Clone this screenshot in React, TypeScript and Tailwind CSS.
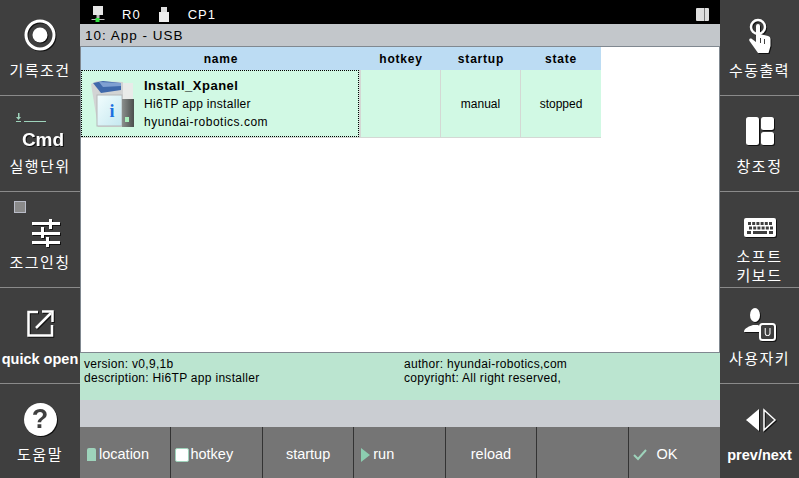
import React from "react";

const kr = "font-['Noto_Sans_CJK_KR','Liberation_Sans',sans-serif]";
const shadow = "drop-shadow-[1px_1px_0_#111111]";

function RecordIcon() {
  return (
    <svg className={`mb-[6px] ${shadow}`} width="32" height="32" viewBox="0 0 32 32">
      <circle cx="16" cy="16" r="14" fill="none" stroke="#fff" strokeWidth="3" />
      <circle cx="16" cy="16" r="7.5" fill="#fff" />
    </svg>
  );
}

function JogIcon() {
  return (
    <svg className={`mt-[6px] ml-[12px] ${shadow}`} width="28" height="28" viewBox="0 0 28 28" fill="#fff">
      <rect x="0" y="3" width="17" height="3" />
      <rect x="20" y="3" width="8" height="3" />
      <rect x="17" y="0" width="3" height="10" />
      <rect x="0" y="13" width="9" height="3" />
      <rect x="12" y="13" width="16" height="3" />
      <rect x="9" y="8" width="3" height="11" />
      <rect x="0" y="22" width="14" height="3" />
      <rect x="17" y="22" width="11" height="3" />
      <rect x="14" y="18" width="3" height="10" />
    </svg>
  );
}

function OpenIcon() {
  return (
    <svg className={`mb-[5px] ${shadow}`} width="27" height="27" viewBox="0 0 27 27" fill="none" stroke="#fff" strokeWidth="2.500">
      <path d="M11 2H1.500V25.500H25V15" />
      <path d="M9 18L24 3" />
      <path d="M15 1.500H25.500V12" />
    </svg>
  );
}

function HelpIcon() {
  return (
    <div className={`mb-[6px] flex h-[33px] w-[33px] items-center justify-center rounded-full bg-white text-[27px] leading-none font-bold text-[#3f3f3f] font-['Liberation_Sans',sans-serif] ${shadow}`}>
      ?
    </div>
  );
}

function HandIcon() {
  return (
    <svg className={`mb-[4px] ${shadow}`} width="22" height="36" viewBox="0 0 22 36">
      <circle cx="9" cy="9" r="7" fill="none" stroke="#fff" strokeWidth="2.500" />
      <path
        d="M7 8a2 2 0 0 1 4 0v8l8 2c1.500.400 2.500 1.500 2.500 3V28l-2 7H9L0.500 23c-1-2 1-3 2.500-2l4 3Z"
        fill="#fff"
      />
      <path d="M11.500 20v5M15.500 21v5" stroke="#3f3f3f" strokeWidth="1" />
    </svg>
  );
}

function PanelIcon() {
  return (
    <svg className={`mb-[6px] ${shadow}`} width="28" height="28" viewBox="0 0 28 28" fill="#fff">
      <rect x="0" y="0" width="13" height="28" rx="2.500" />
      <rect x="15" y="0" width="13" height="13" rx="2.500" />
      <rect x="15" y="15" width="13" height="13" rx="2.500" />
    </svg>
  );
}

function KeyboardIcon() {
  const keys = [];
  for (let i = 0; i < 6; i++) keys.push(<rect key={"a" + i} x={4 + i * 4.200} y="4" width="3" height="3" fill="#3f3f3f" />);
  for (let i = 0; i < 6; i++) keys.push(<rect key={"b" + i} x={5 + i * 4.200} y="8.500" width="3" height="3" fill="#3f3f3f" />);
  return (
    <svg className={shadow} width="32" height="19" viewBox="0 0 32 19">
      <rect width="32" height="19" rx="2" fill="#fff" />
      {keys}
      <rect x="3" y="13" width="4" height="3" fill="#3f3f3f" />
      <rect x="9" y="13" width="14" height="3" fill="#3f3f3f" />
      <rect x="25" y="13" width="4" height="3" fill="#3f3f3f" />
    </svg>
  );
}

function UserIcon() {
  return (
    <svg className={`mb-[2px] ml-[2px] ${shadow}`} width="34" height="34" viewBox="0 0 34 34">
      <ellipse cx="11" cy="7" rx="5" ry="7" fill="#fff" />
      <path d="M0 24c0-4 6-6 9-7h5l4 3h-3v4Z" fill="#fff" />
      <rect x="16" y="16" width="15" height="16" rx="2.500" fill="#3f3f3f" stroke="#fff" strokeWidth="2" />
      <text x="23.500" y="28" fontSize="10" fill="#fff" textAnchor="middle" fontFamily="Liberation Sans">U</text>
    </svg>
  );
}

function PrevNextIcon() {
  return (
    <svg className={`mb-[4px] ml-[2px] ${shadow}`} width="32" height="24" viewBox="0 0 32 24">
      <path d="M14 1V23L1 12Z" fill="#fff" />
      <path d="M19 2V22L30 12Z" fill="none" stroke="#fff" strokeWidth="1.500" />
    </svg>
  );
}

function SideButton({ icon, label, bold, last, iconH = "h-[44px]", extra }: { icon: React.ReactNode; label: React.ReactNode; bold?: boolean; last?: boolean; iconH?: string; extra?: React.ReactNode }) {
  return (
    <div className={`relative flex h-[96px] flex-col items-center pt-[16px] text-white ${last ? "" : "border-b border-[#8a8a8a]"}`}>
      {extra}
      <div className={`flex items-center justify-center ${iconH}`}>{icon}</div>
      <div className={`text-center whitespace-nowrap ${bold ? "mt-[2px] text-[14.5px] leading-[19px] font-bold font-['Liberation_Sans',sans-serif]" : `text-[15px] leading-[19px] tracking-[1.5px] ${kr}`}`}>
        {label}
      </div>
    </div>
  );
}

function AppIcon() {
  return (
    <svg width="47" height="50" viewBox="0 0 47 50">
      <defs>
        <linearGradient id="face" x1="0" y1="0" x2="1" y2="1">
          <stop offset="0" stopColor="#f2fdfe" />
          <stop offset="1" stopColor="#c5e8f0" />
        </linearGradient>
        <linearGradient id="side" x1="0" y1="0" x2="1" y2="0">
          <stop offset="0" stopColor="#8b8f8d" />
          <stop offset="1" stopColor="#4b4f4d" />
        </linearGradient>
      </defs>
      <path d="M33 4H44V24H33Z" fill="#e9ebe9" />
      <path d="M2 5L8 2L34 3V48H9Z" fill="#d2d4d4" />
      <rect x="8" y="16" width="25" height="31" fill="url(#face)" stroke="#b5b8b8" />
      <path d="M4 4L14 2L32 4L32 11L12 14Z" fill="#3f69ab" />
      <path d="M10 3L32 4L32 7L14 8Z" fill="#7fa0d2" />
      <rect x="33" y="20" width="12" height="28" fill="url(#side)" />
      <rect x="36" y="38" width="4" height="5" fill="#a9f0bd" />
      <text x="23" y="38" fontSize="18" fontWeight="bold" fill="#1b6fe0" textAnchor="middle" fontFamily="Liberation Serif">i</text>
    </svg>
  );
}

function BottomButton({ children, left, last }: { children?: React.ReactNode; left?: string; last?: boolean }) {
  return (
    <div className={`flex h-full items-center pt-[4px] text-[14.5px] text-white ${left ?? "justify-center"} ${last ? "" : "border-r border-[#333333]"}`}>
      {children}
    </div>
  );
}

export default function App() {
  return (
    <div className="flex h-[478px] w-[799px] overflow-hidden bg-[#3f3f3f] font-['Liberation_Sans',sans-serif]">
      <aside className="w-[80px] shrink-0">
        <SideButton icon={<RecordIcon />} label="기록조건" />
        <SideButton
          icon={<span className={`mt-[12px] ml-[6px] text-[19px] font-bold font-['Liberation_Sans',sans-serif] ${shadow}`}>Cmd</span>}
          label="실행단위"
          extra={
            <svg className="absolute top-[17px] left-[16px]" width="30" height="10" viewBox="0 0 30 10" fill="#9ed3bb">
              <rect x="2" y="0" width="1.500" height="4" />
              <path d="M0 4H5L2.500 7Z" />
              <rect x="0" y="8" width="5" height="1" />
              <rect x="8" y="8" width="22" height="1" />
            </svg>
          }
        />
        <SideButton
          icon={<JogIcon />}
          label="조그인칭"
          extra={<div className="absolute top-[9px] left-[14px] h-[12px] w-[12px] border border-[#b9bcc8] bg-[#8a8a8a]" />}
        />
        <SideButton icon={<OpenIcon />} label="quick open" bold />
        <SideButton icon={<HelpIcon />} label="도움말" last />
      </aside>

      <main className="flex w-[640px] flex-col border-l border-r border-[#808890] bg-white">
        <div className="-mx-px flex h-[24px] items-center bg-black pt-[6px] pl-[11px] text-[13px] tracking-[1px] text-white">
          <svg className="mb-[2px]" width="16" height="16" viewBox="0 0 16 16">
            <rect x="2" y="0" width="10" height="9" fill="#e5e5e5" />
            <rect x="5.500" y="9" width="3" height="3" fill="#bbb" />
            <rect x="0.500" y="13" width="13" height="1" fill="#bbb" />
            <rect x="4.500" y="12" width="4" height="4" fill="#30e040" />
          </svg>
          <span className="ml-[15px]">R0</span>
          <svg className="ml-[18px] mb-[2px]" width="10" height="15" viewBox="0 0 10 15">
            <rect x="2" y="0" width="6" height="5" fill="#ddd" />
            <rect x="0" y="5" width="10" height="10" fill="#eee" />
          </svg>
          <span className="ml-[19px]">CP1</span>
          <div className="mr-[11px] mb-[2px] ml-auto flex h-[13px] w-[13px] rounded-[1px] bg-[#dfdfdf]">
            <div className="ml-[8px] h-full w-px bg-[#777]" />
          </div>
        </div>
        <div className="-mx-px flex h-[23px] items-center border-b border-[#808890] bg-[#c3c7cb] pt-[3px] pl-[5px] text-[13.5px] tracking-[1px] text-black">
          10: App - USB
        </div>

        <div className="flex-1">
          <div className="flex h-[23px] w-[520px] items-center bg-[#bcdcf3] text-center text-[12px] font-bold tracking-[0.8px] text-black">
            <div className="w-[280px]">name</div>
            <div className="w-[80px]">hotkey</div>
            <div className="w-[80px]">startup</div>
            <div className="w-[80px]">state</div>
          </div>
          <div className="flex h-[68px] w-[520px] items-center border-b border-[#d4d8d4] bg-[#d1f9e4] text-center text-[12px] text-black">
            <div className="flex h-full w-[278px] items-center border border-dotted border-black text-left">
              <div className="mx-[7px]">
                <AppIcon />
              </div>
              <div className="ml-[1px] leading-[18px]">
                <div className="text-[13px] font-bold tracking-[0.5px]">Install_Xpanel</div>
                <div className="tracking-[0.3px]">Hi6TP app installer</div>
                <div className="tracking-[0.5px]">hyundai-robotics.com</div>
              </div>
            </div>
            <div className="h-full w-[1px] bg-[#d4d8d4]" />
            <div className="h-full w-[81px] border-x border-[#d4d8d4]" />
            <div className="flex h-full w-[80px] items-center justify-center border-r border-[#d4d8d4] pt-[1px]">manual</div>
            <div className="flex h-full w-[80px] items-center justify-center pt-[1px]">stopped</div>
          </div>
        </div>

        <div className="-mx-px flex h-[48px] border-t border-[#808890] bg-[#bbe5d0] pt-[4px] pl-[4px] text-[12px] leading-[14px] tracking-[0.3px] text-black">
          <div className="w-[320px]">
            <div>version: v0,9,1b</div>
            <div>description: Hi6TP app installer</div>
          </div>
          <div>
            <div>author: hyundai-robotics,com</div>
            <div>copyright: All right reserved,</div>
          </div>
        </div>
        <div className="-mx-px h-[27px] bg-[#cacdd2]" />
        <div className="-mx-px grid h-[51px] grid-cols-7 bg-[#757575]">
          <BottomButton left="pl-[7px]">
            <div className="mr-[3px] h-[13px] w-[9px] rounded-t-[2px] bg-[#9ed3bb]" />
            location
          </BottomButton>
          <BottomButton left="pl-[4px]">
            <div className="mr-[1px] h-[14px] w-[14px] rounded-[2px] border border-[#9ed3bb] bg-white" />
            hotkey
          </BottomButton>
          <BottomButton>startup</BottomButton>
          <BottomButton left="pl-[7px]">
            <div className="mr-[3px] h-0 w-0 border-y-[7px] border-l-[9px] border-y-transparent border-l-[#8ccdb0]" />
            run
          </BottomButton>
          <BottomButton>reload</BottomButton>
          <BottomButton />
          <BottomButton left="pl-[4px]" last>
            <svg className="mr-[10px]" width="14" height="12" viewBox="0 0 14 12" fill="none" stroke="#9ed3bb" strokeWidth="2">
              <path d="M1 6l4 4L13 1" />
            </svg>
            OK
          </BottomButton>
        </div>
      </main>

      <aside className="w-[79px] shrink-0">
        <SideButton icon={<HandIcon />} label="수동출력" />
        <SideButton icon={<PanelIcon />} label="창조정" />
        <SideButton
          icon={<KeyboardIcon />}
          label={
            <>
              소프트
              <br />
              키보드
            </>
          }
          iconH="h-[38px]"
        />
        <SideButton icon={<UserIcon />} label="사용자키" />
        <SideButton icon={<PrevNextIcon />} label="prev/next" bold last />
      </aside>
    </div>
  );
}
